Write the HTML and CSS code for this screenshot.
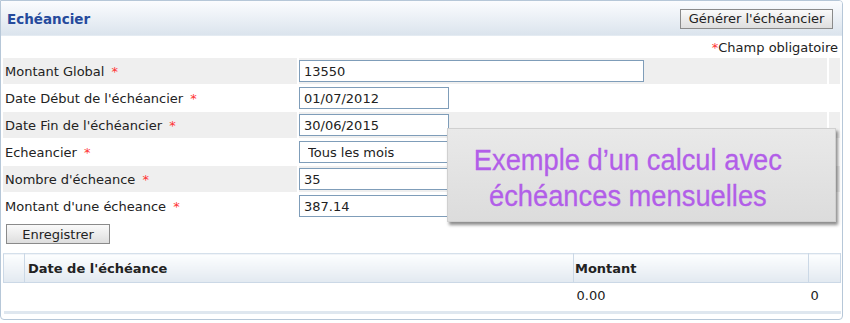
FILE: index.html
```html
<!DOCTYPE html>
<html lang="fr">
<head>
  <meta charset="UTF-8" />
  <title>Echéancier</title>
  <link rel="stylesheet" href="styles.css">
</head>
<body>
  <div class="panel">
    <div class="panel-header">
      <span class="panel-title">Echéancier</span>
      <button type="button" class="btn">Générer l'échéancier</button>
    </div>
    <div class="required-note"><span class="star">*</span>Champ obligatoire</div>
    <table class="form-table">
      <tr class="odd">
        <td class="lbl">Montant Global <span class="star">*</span></td>
        <td class="fld"><input class="txt wide" type="text" value="13550"></td>
        <td class="end"></td>
      </tr>
      <tr>
        <td class="lbl">Date Début de l'échéancier <span class="star">*</span></td>
        <td class="fld"><input class="txt" type="text" value="01/07/2012"></td>
        <td class="end"></td>
      </tr>
      <tr class="odd">
        <td class="lbl">Date Fin de l'échéancier <span class="star">*</span></td>
        <td class="fld"><input class="txt" type="text" value="30/06/2015"></td>
        <td class="end"></td>
      </tr>
      <tr>
        <td class="lbl">Echeancier <span class="star">*</span></td>
        <td class="fld"><select class="txt sel"><option>Tous les mois</option></select></td>
        <td class="end"></td>
      </tr>
      <tr class="odd">
        <td class="lbl">Nombre d'écheance <span class="star">*</span></td>
        <td class="fld"><input class="txt" type="text" value="35"></td>
        <td class="end"></td>
      </tr>
      <tr>
        <td class="lbl">Montant d'une écheance <span class="star">*</span></td>
        <td class="fld"><input class="txt" type="text" value="387.14"></td>
        <td class="end"></td>
      </tr>
    </table>
    <div class="save-row">
      <button type="button" class="btn save">Enregistrer</button>
    </div>
    <table class="grid">
      <tr>
        <th class="c-sel"></th>
        <th class="c-date">Date de l'échéance</th>
        <th class="c-amount">Montant</th>
        <th class="c-last"></th>
      </tr>
      <tr class="data">
        <td></td>
        <td></td>
        <td>0.00</td>
        <td>0</td>
      </tr>
    </table>
  </div>
  <div class="callout">
    <div class="callout-text">Exemple d’un calcul avec<br>échéances mensuelles</div>
  </div>
</body>
</html>
```

FILE: styles.css
```css
* { box-sizing: border-box; }
body {
  margin: 0;
  font-family: "DejaVu Sans", Verdana, sans-serif;
  font-size: 13px;
  color: #222;
  background: #fff;
}
.panel {
  width: 843px;
  height: 320px;
  border: 1px solid #b6c7d8;
  border-radius: 0 4px 4px 4px;
  overflow: hidden;
}
.panel-header {
  height: 35px;
  display: flex;
  align-items: center;
  justify-content: space-between;
  padding: 1px 9px 0 6px;
  background: linear-gradient(#fbfcfe, #dbe4ed);
  border-bottom: 1px solid #e4ebf2;
}
.panel-title { font-weight: bold; color: #254a9c; font-size: 13.5px; }
.btn {
  font-family: "DejaVu Sans", Verdana, sans-serif;
  font-size: 13px;
  color: #222;
  height: 20px;
  padding: 0 6px;
  border: 1px solid #8a8a8a;
  background: linear-gradient(#fafafa, #dedede);
  white-space: nowrap;
  cursor: pointer;
}
.panel-header .btn { min-width: 153px; }
.star { color: #f33; }
.lbl .star { margin-left: 3px; }
.required-note {
  height: 22px;
  padding: 4px 4px 0 0;
  text-align: right;
  line-height: 16px;
}
/* form rows */
.form-table {
  width: 841px;
  border-spacing: 2px 1px;
  margin-top: -1px;
}
.form-table td { height: 26px; padding: 0; }
.form-table .odd td { background: #efefef; }
.lbl { width: 294px; padding-left: 2px !important; }
.end { width: 11px; }
.txt {
  display: block;
  height: 22px;
  width: 150px;
  border: 1px solid #7f9db9;
  background: #fff;
  font-family: "DejaVu Sans", Verdana, sans-serif;
  font-size: 13px;
  color: #222;
  padding: 1px 4px 0;
}
.txt.wide { width: 345px; }
.sel { appearance: none; -webkit-appearance: none; padding-left: 8px; border-radius: 0; }
.save-row { padding: 4px 0 0 5px; height: 33px; }
.save-row .btn { width: 104px; }
/* result grid */
.grid {
  width: 838px;
  margin-left: 2px;
  border-collapse: collapse;
}
.grid th {
  height: 29px;
  text-align: left;
  padding: 0 3px;
  background: linear-gradient(#fdfeff, #e2e9f1);
  border: 1px solid #cbd8e6;
  border-top-color: #d5e0eb;
}
.grid .c-sel { width: 21px; }
.grid .c-date { width: 549px; }
.grid .c-amount { width: 235px; padding-left: 1px; }
.grid .data td {
  height: 30px;
  padding: 0 3px 3px;
  border-bottom: 3px solid #dfe7ef;
}
.grid .data td:nth-child(4) { padding-left: 2px; }
/* overlay callout over the form */
.callout {
  position: absolute;
  left: 447px;
  top: 128px;
  width: 389px;
  height: 94px;
  background: linear-gradient(#e9e9e9, #dcdcdc);
  border: 1px solid #d0d0d0;
  box-shadow: 2px 3px 3px rgba(0, 0, 0, 0.45);
}
.callout-text {
  font-family: "Liberation Sans", Arial, sans-serif;
  font-size: 30px;
  line-height: 36px;
  color: #b25ee8;
  text-align: center;
  padding: 13px 30px 0 0;
  transform: scaleX(0.91);
  -webkit-text-stroke: 0.3px #b25ee8;
}
```
